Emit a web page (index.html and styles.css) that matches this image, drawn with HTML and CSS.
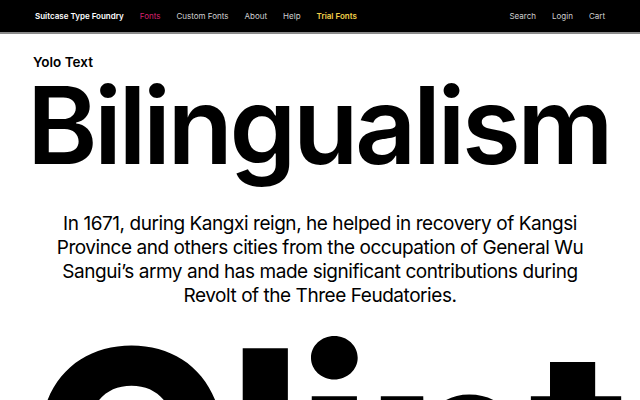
FILE: index.html
```html
<!DOCTYPE html>
<html lang="en">
<head>
<meta charset="utf-8">
<title>Yolo Text — Suitcase Type Foundry</title>
<link rel="stylesheet" href="styles.css">
</head>
<body>
<header class="nav">
  <nav class="nav-left">
    <a class="brand" href="#">Suitcase Type Foundry</a>
    <a class="link link-active" href="#">Fonts</a>
    <a class="link" href="#">Custom Fonts</a>
    <a class="link" href="#">About</a>
    <a class="link" href="#">Help</a>
    <a class="link link-trial" href="#">Trial Fonts</a>
  </nav>
  <nav class="nav-right">
    <a class="link" href="#">Search</a>
    <a class="link" href="#">Login</a>
    <a class="link" href="#">Cart</a>
  </nav>
</header>
<main class="specimen">
  <div class="family">Yolo Text</div>
  <h1 class="headline">Bilingualism</h1>
  <p class="lede">In 1671, during Kangxi reign, he helped in recovery of Kangsi Province and others cities from the occupation of General Wu Sangui’s army and has made significant contributions during Revolt of the Three Feudatories.</p>
  <div class="giant">Olint</div>
</main>
</body>
</html>
```
FILE: styles.css
```css
* { box-sizing: border-box; }
html, body { margin: 0; padding: 0; }
body {
  background: #fff;
  color: #000;
  font-family: Inter, "Noto Sans", sans-serif;
  overflow: hidden;
  height: 400px;
}
.nav {
  height: 34px;
  background: #000;
  border-bottom: 2px solid #8a8a8a;
  display: flex;
  align-items: center;
  justify-content: space-between;
  padding: 0 35px;
  font-size: 8px;
}
.nav-left, .nav-right {
  display: flex;
  align-items: center;
  gap: 16px;
}
.nav a { text-decoration: none; }
.brand { color: #fff; font-weight: 600; }
.link { color: #d0d0d0; }
.link-active { color: #d6226e; }
.link-trial { color: #f2d04a; font-weight: 600; }
.specimen {
  padding: 0 33px;
}
.family {
  margin-top: 20px;
  font-size: 13.5px;
  font-weight: 600;
  line-height: 16px;
}
.headline {
  margin: 0 0 0 -6px;
  font-size: 107px;
  font-weight: 600;
  line-height: 110px;
  letter-spacing: -3.5px;
}
.lede {
  margin: 32px auto 0;
  width: 548px;
  text-align: center;
  font-size: 19px;
  line-height: 24px;
  font-weight: 400;
  letter-spacing: -0.45px;
}
.giant {
  margin-top: 4px;
  margin-left: -4px;
  font-size: 265px;
  font-weight: 800;
  line-height: 265px;
  letter-spacing: -6px;
  white-space: nowrap;
}
```
